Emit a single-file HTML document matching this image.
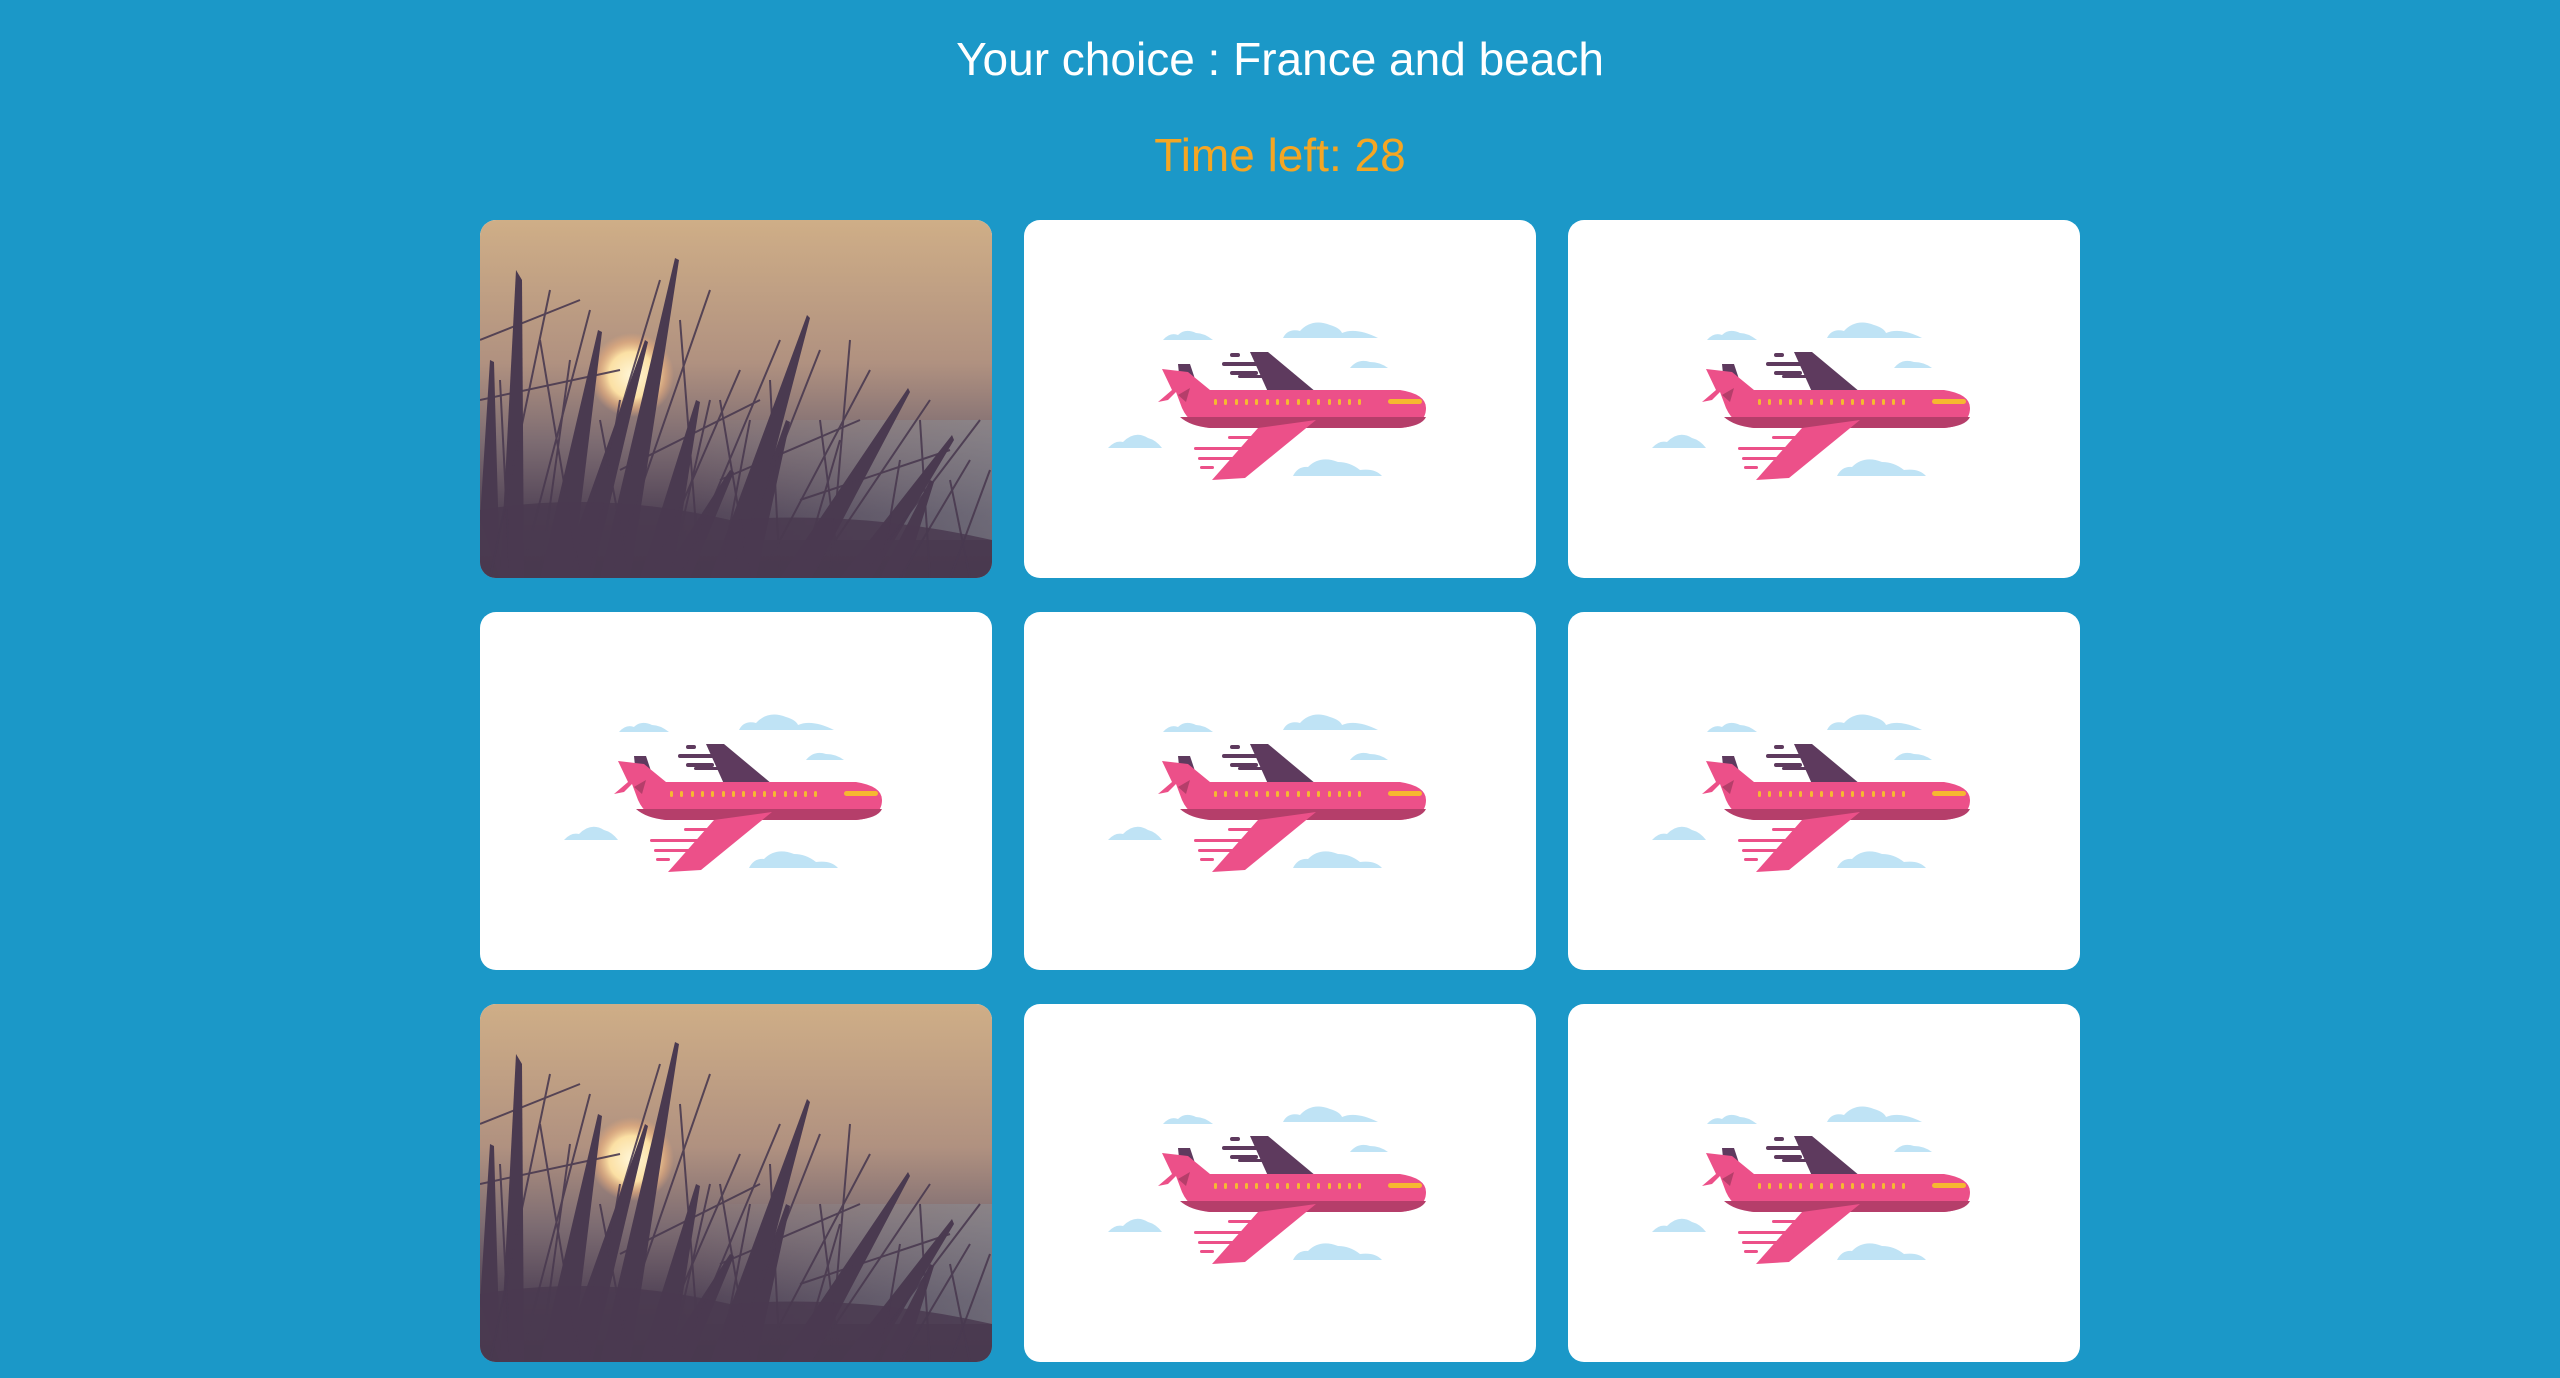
<!DOCTYPE html>
<html><head><meta charset="utf-8">
<style>
html,body{margin:0;padding:0}
body{width:2560px;height:1378px;background:#1b98c8;font-family:"Liberation Sans",sans-serif;overflow:hidden;position:relative}
.t1{position:absolute;top:32px;left:0;width:2560px;text-align:center;color:#fff;font-size:46px}
.t2{position:absolute;top:128px;left:0;width:2560px;text-align:center;color:#f5a623;font-size:46px}
.card{position:absolute;width:512px;height:358px;border-radius:16px;background:#fff;overflow:hidden}
.card svg{position:absolute;left:0;top:0}
</style></head><body>
<svg width="0" height="0" style="position:absolute">
<defs>
<symbol id="plane" viewBox="0 0 512 358">
<g transform="translate(66,80)" >
<g fill="#bfe3f5">
<path d="M73 40 Q80 32 88 35 Q95 28 106 33 Q114 33 123 40Z"/>
<path d="M193 38 Q198 28 210 31 Q222 18 240 25 Q250 28 252 33 Q266 27 288 38Z"/>
<path d="M260 68 Q268 58 280 62 Q290 62 298 68Z"/>
<path d="M18 148 Q25 140 33 142 Q45 130 58 138 Q66 140 72 148Z"/>
<path d="M203 176 Q208 166 218 167 Q230 155 248 162 Q260 162 270 170 Q285 168 292 176Z"/>
</g>
<path fill="#5e3a5e" d="M160 52 L178 52 L226 92 L178 92Z"/>
<path fill="#5e3a5e" d="M88 64 L100 64 L106 82 L90 84Z"/>
<g fill="#5e3a5e">
<rect x="140" y="53" width="10" height="4" rx="2"/>
<rect x="132" y="62" width="36" height="4" rx="2"/>
<rect x="140" y="71" width="28" height="4" rx="2"/>
<rect x="148" y="75" width="42" height="3" rx="1.5"/>
</g>
<path fill="#ec5089" d="M72 69 L98 72 L120 90 L310 90 Q336 94 336 108 Q336 126 310 128 L120 128 Q100 126 92 108 L86 92 L78 100 L68 102 L82 90Z"/>
<path fill="#b53e6a" d="M90 117 L336 117 Q332 126 310 128 L120 128 Q100 126 90 117Z"/>
<path fill="#b53e6a" d="M88 95 L100 88 L96 102Z"/>
<path fill="#ec5089" d="M168 128 L226 120 L155 178 L122 180Z"/>
<g fill="#ec5089">
<rect x="138" y="136" width="30" height="3" rx="1.5"/>
<rect x="104" y="147" width="56" height="3" rx="1.5"/>
<rect x="108" y="157" width="42" height="3" rx="1.5"/>
<rect x="110" y="166" width="14" height="3" rx="1.5"/>
</g>
<g fill="#f6b830">
<rect x="298" y="99" width="34" height="5" rx="2.5"/>
<rect x="124" y="99" width="3" height="6" rx="1.5"/><rect x="134" y="99" width="3" height="6" rx="1.5"/><rect x="145" y="99" width="3" height="6" rx="1.5"/><rect x="155" y="99" width="3" height="6" rx="1.5"/><rect x="165" y="99" width="3" height="6" rx="1.5"/><rect x="176" y="99" width="3" height="6" rx="1.5"/><rect x="186" y="99" width="3" height="6" rx="1.5"/><rect x="196" y="99" width="3" height="6" rx="1.5"/><rect x="207" y="99" width="3" height="6" rx="1.5"/><rect x="217" y="99" width="3" height="6" rx="1.5"/><rect x="227" y="99" width="3" height="6" rx="1.5"/><rect x="238" y="99" width="3" height="6" rx="1.5"/><rect x="248" y="99" width="3" height="6" rx="1.5"/><rect x="258" y="99" width="3" height="6" rx="1.5"/><rect x="268" y="99" width="3" height="6" rx="1.5"/>
</g>
</g>
</symbol>
<linearGradient id="sky" x1="0" y1="0" x2="0" y2="1">
<stop offset="0" stop-color="#cfae87"/><stop offset="0.4" stop-color="#b09180"/><stop offset="0.62" stop-color="#7d6c72"/><stop offset="0.82" stop-color="#524457"/><stop offset="1" stop-color="#45374a"/>
</linearGradient>
<linearGradient id="haze" x1="0" y1="0" x2="1" y2="0">
<stop offset="0" stop-color="#8a9098" stop-opacity="0"/><stop offset="1" stop-color="#8a9098" stop-opacity="0.5"/>
</linearGradient>
<radialGradient id="sun"><stop offset="0" stop-color="#fff6d8"/><stop offset="0.55" stop-color="#fbe0a4"/><stop offset="0.8" stop-color="#eab07e" stop-opacity="0.6"/><stop offset="1" stop-color="#e7a87a" stop-opacity="0"/></radialGradient>
<symbol id="photo" viewBox="0 0 512 358">
<rect width="512" height="358" fill="url(#sky)"/>
<rect x="200" y="200" width="312" height="120" fill="url(#haze)"/>
<circle cx="152" cy="155" r="42" fill="url(#sun)"/>
<g fill="#4a3a50">
<path d="M20 358 L36 50 L42 60 L44 358Z"/>
<path d="M120 358 L195 38 L199 40 L150 358Z"/>
<path d="M60 358 L118 110 L122 112 L92 358Z"/>
<path d="M230 358 L327 95 L330 98 L262 358Z"/>
<path d="M300 358 L428 168 L430 172 L332 358Z"/>
<path d="M360 358 L472 215 L474 220 L392 358Z"/>
<path d="M160 358 L216 180 L220 182 L192 358Z"/>
<path d="M0 300 L10 140 L14 142 L20 358Z"/>
<path d="M80 358 L165 120 L168 122 L112 358Z"/>
<path d="M250 358 L306 200 L310 202 L276 358Z"/>
<path d="M400 358 L450 260 L454 262 L424 358Z"/>
<path d="M180 358 L250 250 L254 252 L210 358Z"/>
<path d="M0 358 L0 290 Q120 270 250 300 Q380 290 512 320 L512 358Z" opacity="0.85"/>
</g>
<g stroke="#4a3a50" stroke-width="2" fill="none" opacity="0.9">
<path d="M10 358 L70 70"/><path d="M40 358 L110 90"/><path d="M90 358 L180 60"/><path d="M130 358 L230 70"/><path d="M170 358 L260 150"/><path d="M200 358 L300 120"/><path d="M250 358 L340 130"/><path d="M280 358 L390 150"/><path d="M330 358 L450 180"/><path d="M380 358 L500 200"/><path d="M420 358 L490 240"/><path d="M0 120 L100 80"/><path d="M0 180 L140 150"/><path d="M100 358 L60 120"/><path d="M220 358 L200 100"/><path d="M300 358 L290 160"/><path d="M350 358 L370 120"/><path d="M450 358 L440 200"/>
<path d="M30 358 L20 160"/><path d="M60 358 L90 140"/><path d="M110 358 L140 180"/><path d="M150 358 L120 200"/><path d="M190 358 L230 180"/><path d="M240 358 L270 200"/><path d="M270 358 L240 180"/><path d="M320 358 L360 220"/><path d="M360 358 L340 200"/><path d="M400 358 L420 240"/><path d="M470 358 L510 250"/><path d="M490 358 L470 260"/><path d="M140 250 L280 180"/><path d="M240 260 L380 200"/><path d="M320 280 L470 230"/>
</g>
</symbol>
</defs></svg>
<div class="t1">Your choice : France and beach</div>
<div class="t2">Time left: 28</div>

<div class="card" style="left:480px;top:220px"><svg width="512" height="358"><use href="#photo"/></svg></div>
<div class="card" style="left:1024px;top:220px"><svg width="512" height="358"><use href="#plane"/></svg></div>
<div class="card" style="left:1568px;top:220px"><svg width="512" height="358"><use href="#plane"/></svg></div>

<div class="card" style="left:480px;top:612px"><svg width="512" height="358"><use href="#plane"/></svg></div>
<div class="card" style="left:1024px;top:612px"><svg width="512" height="358"><use href="#plane"/></svg></div>
<div class="card" style="left:1568px;top:612px"><svg width="512" height="358"><use href="#plane"/></svg></div>

<div class="card" style="left:480px;top:1004px"><svg width="512" height="358"><use href="#photo"/></svg></div>
<div class="card" style="left:1024px;top:1004px"><svg width="512" height="358"><use href="#plane"/></svg></div>
<div class="card" style="left:1568px;top:1004px"><svg width="512" height="358"><use href="#plane"/></svg></div>
</body></html>
